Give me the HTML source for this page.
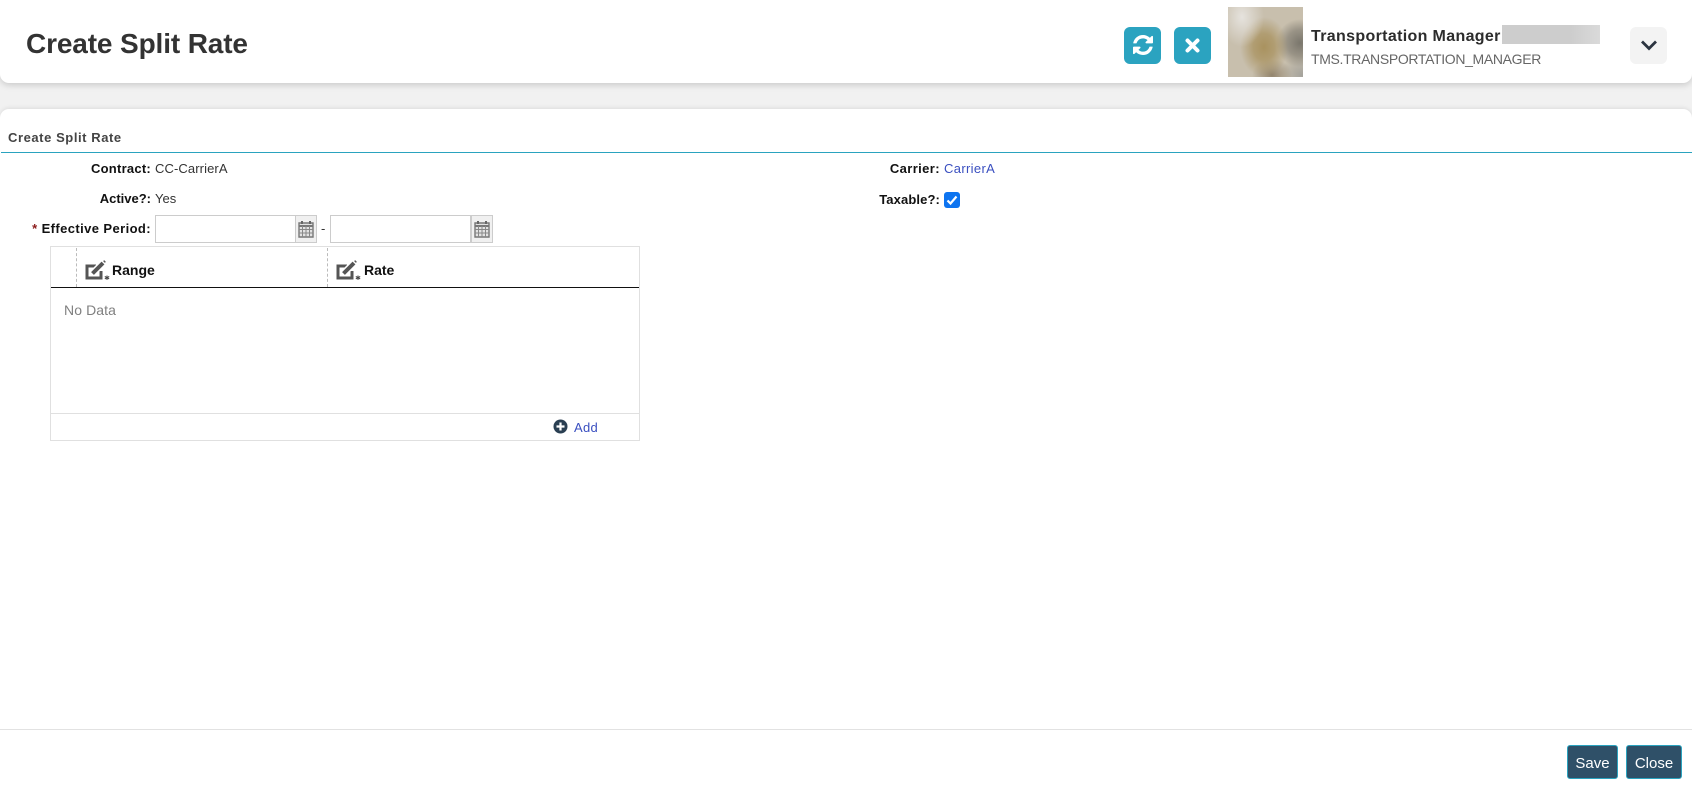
<!DOCTYPE html>
<html lang="en"><head><meta charset="utf-8"><title>Create Split Rate</title>
<style>
html,body{margin:0;padding:0;background:#fff}
body{position:relative;width:1692px;height:788px;overflow:hidden;font-family:"Liberation Sans",sans-serif;font-size:13px;color:#333}
.a{position:absolute;white-space:nowrap}
.bg{left:0;top:0;width:1692px;height:140px;background:#f1f1f1}
.hdr{left:0;top:0;width:1692px;height:83px;background:#fff;border-radius:0 0 9px 9px;box-shadow:0 2px 7px rgba(0,0,0,.17)}
.card{left:0;top:109px;width:1692px;height:679px;background:#fff;border-radius:9px 9px 0 0;box-shadow:0 -1px 4px rgba(0,0,0,.09)}
.b{font-weight:bold;color:#111}
.l{font-size:13px;line-height:18px;text-align:right}
.btn{width:37px;height:37px;border-radius:6px;background:#2ba3c0}
.inp{box-sizing:border-box;height:28px;background:#fff;border:1px solid #ccc}
.cal{box-sizing:border-box;height:28px;width:22px;background:#f0f0f0;border:1px solid #ccc}
.fb{box-sizing:border-box;height:34px;top:745px;background:#2f5068;border:1px solid #2aa3bf;border-radius:3px;color:#fff;font-size:15px;line-height:36px;text-align:center}
</style></head><body>
<div class="a bg"></div>
<div class="a hdr"></div>
<div class="a card"></div>

<div class="a" style="left:26px;top:26px;font-size:28px;line-height:36px;font-weight:bold;color:#333;letter-spacing:-.13px">Create Split Rate</div>

<div class="a btn" style="left:1124px;top:27px"><svg style="position:absolute;left:9px;top:8px" width="20" height="20" viewBox="0 0 1536 1536"><path fill="#fff" d="M1511 928q0 5-1 7-64 268-268 434.5t-478 166.5q-146 0-282.5-55t-243.5-157l-129 129q-19 19-45 19t-45-19-19-45v-448q0-26 19-45t45-19h448q26 0 45 19t19 45-19 45l-137 137q71 66 161 102t187 36q134 0 250-65t186-179q11-17 53-117 8-23 30-23h192q13 0 22.5 9.5t9.5 22.5zm25-800v448q0 26-19 45t-45 19h-448q-26 0-45-19t-19-45 19-45l138-138q-148-137-349-137-134 0-250 65t-186 179q-11 17-53 117-8 23-30 23h-199q-13 0-22.5-9.5t-9.5-22.5v-7q65-268 270-434.5t480-166.5q146 0 284 55.5t245 156.5l130-129q19-19 45-19t45 19 19 45z"/></svg></div>
<div class="a btn" style="left:1174px;top:27px"><svg style="position:absolute;left:11px;top:11px" width="15" height="15" viewBox="0 0 15 15"><path d="M2.500 2.500l10 10M12.500 2.500l-10 10" stroke="#fff" stroke-width="4" stroke-linecap="round" fill="none"/></svg></div>

<div class="a" style="left:1228px;top:7px;width:75px;height:70px;background:
radial-gradient(ellipse 22px 30px at 14px 10px,#e6e3de 0%,rgba(230,227,222,0) 100%),
radial-gradient(ellipse 24px 30px at 36px 40px,#a9925f 0%,rgba(169,146,95,.75) 45%,rgba(169,146,95,0) 100%),
radial-gradient(ellipse 24px 24px at 72px 36px,#7a766c 0%,rgba(122,118,108,.6) 55%,rgba(122,118,108,0) 100%),
radial-gradient(ellipse 20px 16px at 44px 68px,#93856e 0%,rgba(147,133,110,0) 100%),
radial-gradient(ellipse 22px 20px at 74px 68px,#a5a39c 0%,rgba(165,163,156,0) 100%),
#c8bfad"></div>

<div class="a" style="left:1311px;top:26px;font-size:16px;line-height:22px;font-weight:bold;color:#2c2c2c;letter-spacing:.34px">Transportation Manager</div>
<div class="a" style="left:1502px;top:25px;width:98px;height:19px;background:linear-gradient(90deg,#cdcdcd 0%,#cdcdcd 70%,#dadada 100%)"></div>
<div class="a" style="left:1311px;top:49px;font-size:14px;line-height:20px;color:#666;letter-spacing:-.34px">TMS.TRANSPORTATION_MANAGER</div>

<div class="a" style="left:1630px;top:27px;width:37px;height:37px;border-radius:6px;background:#f3f3f3"><svg style="position:absolute;left:10px;top:12px" width="18" height="12" viewBox="0 0 18 12"><path d="M2 2.500l7 7 7-7" fill="none" stroke="#2b3440" stroke-width="2.800"/></svg></div>

<div class="a" style="left:8px;top:129px;font-size:13px;line-height:18px;font-weight:bold;color:#444;letter-spacing:.57px">Create Split Rate</div>
<div class="a" style="left:1px;top:152px;width:1691px;height:1px;background:#2aa3bf"></div>

<div class="a l b" style="left:40px;width:111px;top:160px;letter-spacing:.25px">Contract:</div>
<div class="a l" style="left:155px;top:160px;color:#333;letter-spacing:.1px">CC-CarrierA</div>
<div class="a l b" style="left:40px;width:111px;top:190px">Active?:</div>
<div class="a l" style="left:155px;top:190px;color:#333">Yes</div>
<div class="a l b" style="left:20px;width:131px;top:220px;letter-spacing:.4px"><span style="color:#8b1a1a">*</span> Effective Period:</div>

<div class="a inp" style="left:155px;top:215px;width:141px"></div>
<div class="a cal" style="left:295px;top:215px"><svg style="position:absolute;left:2px;top:3px" width="16" height="20" viewBox="0 0 16 20"><path d="M1 4h14v14H1z" fill="#e2e2e2" stroke="#777" stroke-width="1.400"/><path d="M1 7h14" stroke="#777" stroke-width="2"/><path d="M4 2v3M12 2v3" stroke="#666" stroke-width="2"/><path d="M1 10.500h14M1 14h14M4.500 7v11M8 7v11M11.500 7v11" stroke="#888" stroke-width="1"/></svg></div>
<div class="a" style="left:321px;top:220px;line-height:18px">-</div>
<div class="a inp" style="left:330px;top:215px;width:141px"></div>
<div class="a cal" style="left:471px;top:215px"><svg style="position:absolute;left:2px;top:3px" width="16" height="20" viewBox="0 0 16 20"><path d="M1 4h14v14H1z" fill="#e2e2e2" stroke="#777" stroke-width="1.400"/><path d="M1 7h14" stroke="#777" stroke-width="2"/><path d="M4 2v3M12 2v3" stroke="#666" stroke-width="2"/><path d="M1 10.500h14M1 14h14M4.500 7v11M8 7v11M11.500 7v11" stroke="#888" stroke-width="1"/></svg></div>

<div class="a l b" style="left:800px;width:140px;top:160px;letter-spacing:.4px">Carrier:</div>
<div class="a l" style="left:944px;top:160px;color:#3a4fc0;letter-spacing:.35px">CarrierA</div>
<div class="a l b" style="left:800px;width:140px;top:191px;letter-spacing:.12px">Taxable?:</div>
<div class="a" style="left:944px;top:192px;width:16px;height:16px;border-radius:3px;background:#0d74f0"><svg style="position:absolute;left:0;top:0" width="16" height="16" viewBox="0 0 16 16"><path d="M3.500 8.500l3 3 6-7" fill="none" stroke="#fff" stroke-width="2.200"/></svg></div>

<div class="a" style="left:50px;top:246px;width:590px;height:195px;box-sizing:border-box;border:1px solid #e0e0e0"></div>
<div class="a" style="left:51px;top:287px;width:588px;height:1px;background:#111"></div>
<div class="a" style="left:76px;top:248px;height:39px;border-left:1px dashed #bbb"></div>
<div class="a" style="left:327px;top:248px;height:39px;border-left:1px dashed #bbb"></div>

<svg class="a" style="left:85px;top:260px" width="25" height="20" viewBox="0 0 25 20"><path d="M11 6H2v12h14v-7" fill="none" stroke="#555" stroke-width="3"/><path d="M8 13L19 2" stroke="#fff" stroke-width="7"/><path d="M7.500 13.500L18 3" stroke="#555" stroke-width="4"/><path d="M19 2l1-1" stroke="#555" stroke-width="2.500"/><path d="M22 15.500v4.500M19.800 16.500l4.400 2.400M24.200 16.500l-4.400 2.400" stroke="#444" stroke-width="1"/></svg>
<div class="a" style="left:112px;top:260px;font-size:14px;line-height:20px;font-weight:bold;color:#111">Range</div>
<svg class="a" style="left:336px;top:260px" width="25" height="20" viewBox="0 0 25 20"><path d="M11 6H2v12h14v-7" fill="none" stroke="#555" stroke-width="3"/><path d="M8 13L19 2" stroke="#fff" stroke-width="7"/><path d="M7.500 13.500L18 3" stroke="#555" stroke-width="4"/><path d="M19 2l1-1" stroke="#555" stroke-width="2.500"/><path d="M22 15.500v4.500M19.800 16.500l4.400 2.400M24.200 16.500l-4.400 2.400" stroke="#444" stroke-width="1"/></svg>
<div class="a" style="left:364px;top:260px;font-size:14px;line-height:20px;font-weight:bold;color:#111">Rate</div>

<div class="a" style="left:64px;top:300px;font-size:14px;line-height:20px;color:#808080;letter-spacing:.1px">No Data</div>
<div class="a" style="left:51px;top:413px;width:588px;height:1px;background:#e0e0e0"></div>
<svg class="a" style="left:553px;top:419px" width="15" height="15" viewBox="0 0 15 15"><circle cx="7.500" cy="7.500" r="7" fill="#2a3f52"/><path d="M7.500 3.500v8M3.500 7.500h8" stroke="#fff" stroke-width="2.200"/></svg>
<div class="a" style="left:574px;top:419px;font-size:13px;line-height:18px;color:#3a4fc0;letter-spacing:.3px">Add</div>

<div class="a" style="left:0;top:729px;width:1692px;height:1px;background:#e2e2e2"></div>
<div class="a fb" style="left:1567px;width:51px">Save</div>
<div class="a fb" style="left:1626px;width:56px">Close</div>
</body></html>
